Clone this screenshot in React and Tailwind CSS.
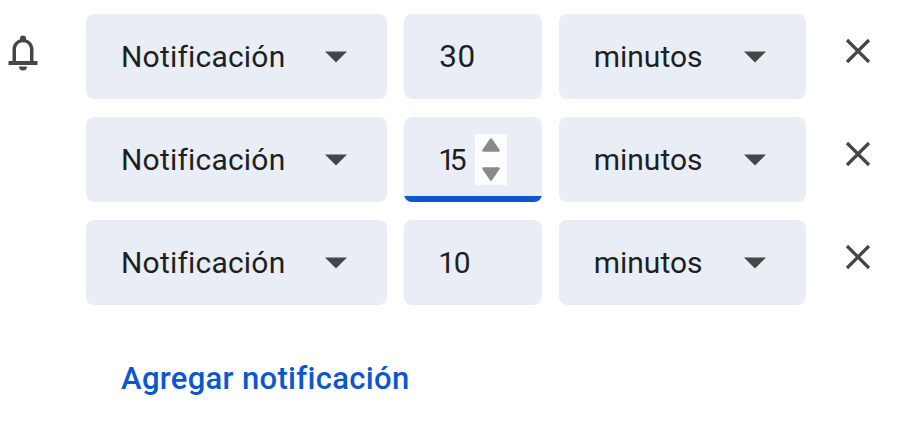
const F = "[font-family:Roboto,'Noto_Sans',sans-serif]";

function Caret() {
  return (
    <svg width="22" height="12" viewBox="0 0 22 12" className="mt-[1px] shrink-0">
      <path d="M0 0.5H22L11 11.5Z" fill="#444746" />
    </svg>
  );
}

function Close() {
  return (
    <svg width="26" height="26" viewBox="0 0 26 26" className="mt-[-11px] shrink-0">
      <path d="M2 2L24 24M24 2L2 24" stroke="#444746" strokeWidth="3.2" fill="none" />
    </svg>
  );
}

function Row({ value, spacing, focused }) {
  return (
    <div className="flex h-[85.6px] items-center">
      <div className="flex h-full w-[301px] items-center justify-between rounded-[8px] bg-[#e9eef6] pl-[35px] pr-[40px]">
        <span className="mt-[1px] text-[30px] tracking-[0.2px] text-[#1f1f1f]">Notificación</span>
        <Caret />
      </div>
      <div className="relative ml-[17.3px] flex h-full w-[137.4px] items-center overflow-hidden rounded-[8px] bg-[#e9eef6] pl-[35px]">
        <span className={`mt-[1px] text-[#1f1f1f] ${spacing}`}>{value}</span>
        {focused && (
          <>
            <div className="absolute left-[71px] top-[17px] flex h-[51px] w-[32px] flex-col items-center justify-between bg-[#fdfdfd] py-[4px]">
              <svg width="18" height="14" viewBox="0 0 18 14"><path d="M9 1.5L16.500 12.500H1.500Z" fill="#8a8a8a" stroke="#8a8a8a" strokeWidth="2.500" strokeLinejoin="round" /></svg>
              <svg width="18" height="14" viewBox="0 0 18 14"><path d="M9 12.500L16.500 1.500H1.500Z" fill="#8a8a8a" stroke="#8a8a8a" strokeWidth="2.500" strokeLinejoin="round" /></svg>
            </div>
            <div className="absolute bottom-0 left-0 h-[6px] w-full bg-[#0b57d0]" />
          </>
        )}
      </div>
      <div className="ml-[17px] flex h-full w-[247.700px] items-center justify-between rounded-[8px] bg-[#e9eef6] pl-[35px] pr-[40px]">
        <span className="mt-[1px] text-[30px] text-[#1f1f1f]">minutos</span>
        <Caret />
      </div>
      <div className="ml-[38.500px] flex">
        <Close />
      </div>
    </div>
  );
}

export default function App() {
  return (
    <div className={`flex h-[426px] w-[914px] bg-white ${F}`}>
      <div className="w-[86px] shrink-0 pl-[7.500px] pt-[34.500px]">
        <svg width="30" height="36" viewBox="0 0 30 36">
          <path d="M15 .5a3 3 0 0 1 3 3v1c4.600 1.300 7.500 5.200 7.500 10.400v11.100h4v4H.5v-4h4V14.900c0-5.200 2.900-9.100 7.500-10.400v-1a3 3 0 0 1 3-3Z M8 26h14V14.900c0-4.500-2.900-7.600-7-7.600s-7 3.100-7 7.600Z" fill="#444746" fillRule="evenodd" />
          <path d="M11 31.500h8a4 4 0 0 1-8 0Z" fill="#444746" />
        </svg>
      </div>
      <div className="flex flex-col gap-[17.400px] pt-[13.700px]">
        <Row value="30" spacing="text-[31.500px] tracking-[0.500px]" />
        <Row value="15" spacing="-ml-[1px] text-[30px] tracking-[-5.500px]" focused />
        <Row value="10" spacing="-ml-[1px] text-[30px] tracking-[-1.500px]" />
        <div className="pl-[35px] pt-[37px] text-[31px] font-medium leading-[38px] tracking-[0.32px] text-[#0b57d0]">Agregar notificación</div>
      </div>
    </div>
  );
}
